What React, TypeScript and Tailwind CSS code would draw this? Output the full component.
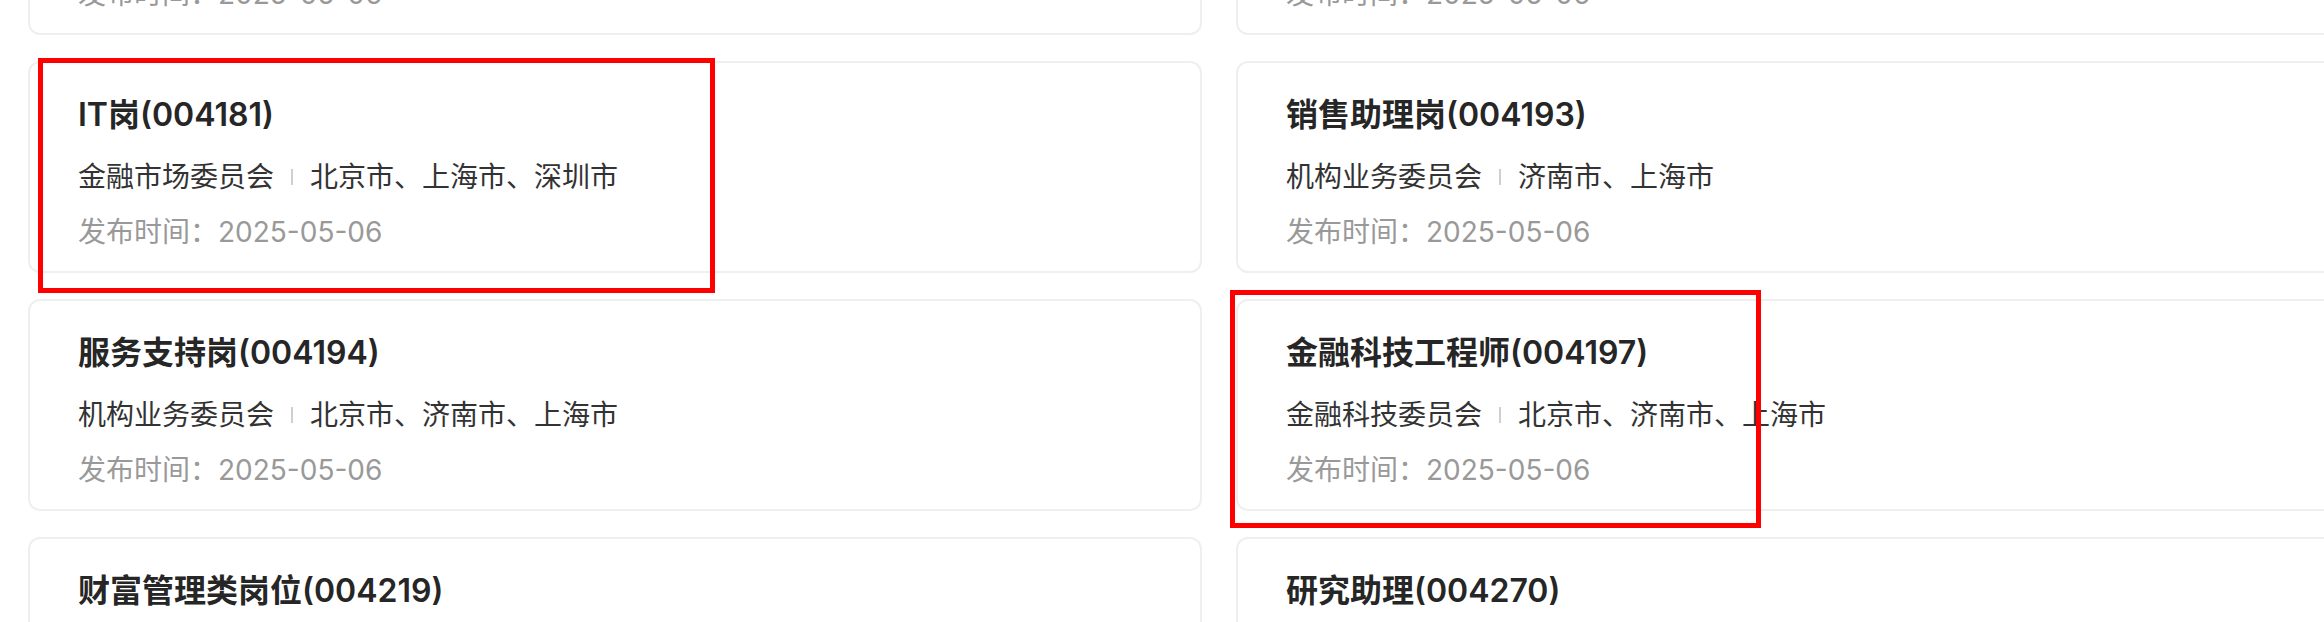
import React from "react";

type Job = {
  title: string;
  dept: string;
  cities: string;
  date: string;
};

const jobs: Job[] = [
  { title: "客户经理(004175)", dept: "财富管理委员会", cities: "北京市、上海市", date: "2025-05-06" },
  { title: "投资顾问(004178)", dept: "财富管理委员会", cities: "济南市、上海市", date: "2025-05-06" },
  { title: "IT岗(004181)", dept: "金融市场委员会", cities: "北京市、上海市、深圳市", date: "2025-05-06" },
  { title: "销售助理岗(004193)", dept: "机构业务委员会", cities: "济南市、上海市", date: "2025-05-06" },
  { title: "服务支持岗(004194)", dept: "机构业务委员会", cities: "北京市、济南市、上海市", date: "2025-05-06" },
  { title: "金融科技工程师(004197)", dept: "金融科技委员会", cities: "北京市、济南市、上海市", date: "2025-05-06" },
  { title: "财富管理类岗位(004219)", dept: "财富管理委员会", cities: "北京市、上海市", date: "2025-05-06" },
  { title: "研究助理(004270)", dept: "研究所", cities: "北京市、上海市", date: "2025-05-06" },
];

function JobCard({ job }: { job: Job }) {
  return (
    <div className="h-[212px] rounded-[12px] border-2 border-[#efefef] bg-white pl-[48px] pt-[30px]">
      <h3 className="text-[32px] leading-[44px] font-semibold text-[#262626] whitespace-nowrap">{job.title}</h3>
      <p className="mt-[20px] flex items-center text-[28px] leading-[40px] text-[#333333] whitespace-nowrap">
        <span>{job.dept}</span>
        <span className="mx-[17px] h-[16px] w-[2px] bg-[#cfcfcf]" />
        <span>{job.cities}</span>
      </p>
      <p className="mt-[15px] text-[28px] leading-[40px] text-[#999999] whitespace-nowrap">
        发布时间：{job.date}
      </p>
    </div>
  );
}

export default function App() {
  return (
    <div
      className="relative h-[622px] w-[2324px] overflow-hidden bg-white"
      style={{ fontFamily: 'Inter, "Noto Sans CJK SC", "Noto Sans", sans-serif' }}
    >
      <div className="-mt-[177px] grid grid-cols-[1174px_1174px] gap-x-[34px] gap-y-[26px] pl-[28px]">
        {jobs.map((job) => (
          <JobCard key={job.title} job={job} />
        ))}
      </div>

      {/* annotation boxes */}
      <div className="pointer-events-none absolute left-[38px] top-[58px] h-[235px] w-[677px] border-[5px] border-[#ff0000]" />
      <div className="pointer-events-none absolute left-[1230px] top-[290px] h-[238px] w-[531px] border-[5px] border-[#ff0000]" />
    </div>
  );
}
